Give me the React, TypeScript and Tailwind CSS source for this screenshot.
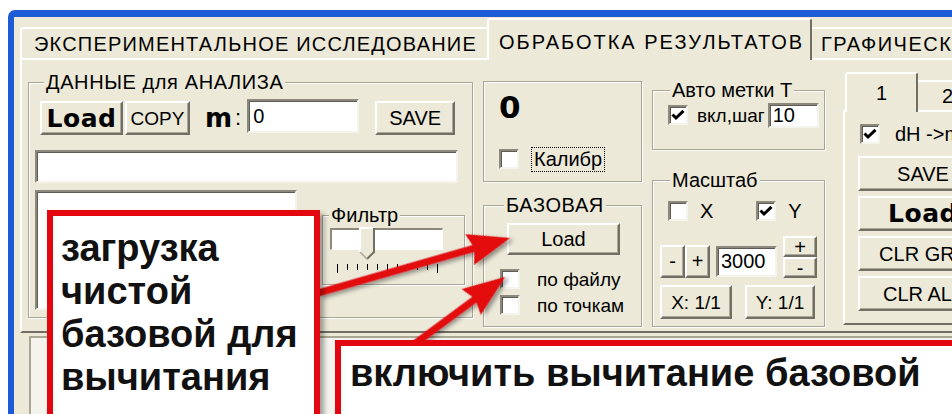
import React from "react";

type Kids = { children?: React.ReactNode; className?: string };

const RAISED =
  "flex items-center justify-center bg-[#ECE9D8] border-2 border-t-white border-l-white border-r-[#716F64] border-b-[#716F64] shadow-[inset_-1px_-1px_0_#ACA899]";
const SUNKEN =
  "bg-white border-2 border-t-[#8C897C] border-l-[#8C897C] border-r-[#F4F3EC] border-b-[#F4F3EC] shadow-[inset_1px_1px_0_#5E5C55]";
const ETCHED = "border border-[#A8A595] shadow-[inset_1px_1px_0_#fff,1px_1px_0_#fff]";

function Btn({ children, className = "" }: Kids) {
  return <div className={`${RAISED} ${className}`}>{children}</div>;
}

function Field({ children, className = "" }: Kids) {
  return <div className={`${SUNKEN} ${className}`}>{children}</div>;
}

function Tick() {
  return (
    <svg width="14" height="12" viewBox="0 0 14 12">
      <path d="M1.5 5.5 L5 9 L12.5 1.8" fill="none" stroke="#000" strokeWidth="3" />
    </svg>
  );
}

function CheckBox({ checked = false }: { checked?: boolean }) {
  return (
    <span className={`w-[20px] h-[20px] shrink-0 flex items-center justify-center ${SUNKEN}`}>
      {checked && <Tick />}
    </span>
  );
}

function Group({
  title,
  className = "",
  legendClass = "",
  children,
}: Kids & { title: string; legendClass?: string }) {
  return (
    <fieldset className={`${ETCHED} shrink-0 ${className}`}>
      <legend className={`px-[2px] text-[20px] leading-[20px] bg-[#ECE9D8] ${legendClass}`}>{title}</legend>
      {children}
    </fieldset>
  );
}

// trackbar thumb, pointing down
function Thumb() {
  return (
    <svg width="16" height="34" viewBox="0 0 16 34">
      <path d="M1 1 H15 V25 L8 32 L1 25 Z" fill="#ECE9D8" />
      <path d="M1 25 V1 H15" fill="none" stroke="#fff" strokeWidth="2" />
      <path d="M15 1 V25 L8 32" fill="none" stroke="#716F64" strokeWidth="2" />
      <path d="M1 25 L8 32" fill="none" stroke="#ACA899" strokeWidth="1.5" />
    </svg>
  );
}

function Arrow({ x, y, angle, len }: { x: number; y: number; angle: number; len: number }) {
  return (
    <g transform={`translate(${x} ${y}) rotate(${angle})`} filter="url(#arrowShadow)">
      <polygon
        points={`${-len},-3.5 -38,-3.5 -42,-16 0,0 -42,16 -38,3.5 ${-len},3.5`}
        fill="#E3080F"
      />
    </g>
  );
}

export default function App() {
  const ticks = Array.from({ length: 11 }, (_, i) => i);
  return (
    <div className="relative w-[952px] h-[414px] overflow-hidden bg-white font-['Liberation_Sans',Arial,sans-serif] text-black text-[20px] leading-none">
      <div className="h-[10px]" />
      <div className="flex h-[404px]">
        <div className="w-[8px] shrink-0" />
        <div className="flex-1 min-w-0 flex flex-col border-t-[7px] border-l-[6px] border-[#1D5AD6] rounded-tl-[7px] bg-[#ECE9D8] pl-[6px]">
          {/* page tabs */}
          <div className="flex items-end h-[41px] shrink-0">
            <div className="w-[467px] h-[31px] shrink-0 flex items-center pl-[12px] border-t-2 border-l-2 border-white rounded-tl-[3px] tracking-[1.2px] whitespace-nowrap">
              ЭКСПЕРИМЕНТАЛЬНОЕ ИССЛЕДОВАНИЕ
            </div>
            <div className="relative z-10 w-[325px] h-[42px] mb-[-2px] shrink-0 pt-[12px] pl-[10px] bg-[#ECE9D8] border-t-2 border-l-2 border-white border-r-2 border-r-[#716F64] rounded-t-[3px] tracking-[2px] whitespace-nowrap">
              ОБРАБОТКА РЕЗУЛЬТАТОВ
            </div>
            <div className="h-[31px] shrink-0 flex items-center pl-[9px] border-t-2 border-white tracking-[1.5px] whitespace-nowrap">
              ГРАФИЧЕСКОЕ ОТОБРАЖЕНИЕ
            </div>
          </div>

          {/* page body */}
          <div className="h-[275px] shrink-0 flex items-start border-t-2 border-l-2 border-white border-b-2 border-b-[#716F64]">
            {/* data group */}
            <Group
              title="ДАННЫЕ для АНАЛИЗА"
              className="ml-[6px] mt-[12px] w-[445px] h-[246px] pl-[10px]"
              legendClass="ml-[5px] tracking-[0.6px]"
            >
              <div className="flex items-center mt-[8px] h-[36px] ml-[1px]">
                <Btn className="w-[83px] h-[34px] font-['DejaVu_Sans',sans-serif] font-bold text-[25px] tracking-[0.5px]">
                  Load
                </Btn>
                <Btn className="ml-[2px] w-[65px] h-[34px] text-[19px]">COPY</Btn>
                <span className="ml-[15px] font-['DejaVu_Sans',sans-serif] font-bold text-[26px]">m</span>
                <span className="ml-[3px] text-[22px]">:</span>
                <Field className="ml-[6px] w-[112px] h-[34px] mt-[-5px] pl-[4px] flex items-center text-[20px]">0</Field>
                <Btn className="ml-[16px] w-[80px] h-[34px] text-[20px]">SAVE</Btn>
              </div>
              <Field className="mt-[14px] ml-[-4px] w-[423px] h-[33px]" />
              <div className="flex items-start mt-[7px] ml-[-4px]">
                <Field className="w-[262px] h-[120px]" />
                <Group title="Фильтр" className="ml-[25px] mt-[15px] w-[143px] h-[80px] pl-[4px]" legendClass="ml-[2px]">
                  <div className="relative h-[34px] mt-[3px]">
                    <div className="ml-[3px] w-[113px] h-[22px] bg-white border-t-2 border-l-2 border-[#8C897C] border-b border-r border-b-white border-r-white" />
                    <div className="absolute left-[32px] top-[-1px]">
                      <Thumb />
                    </div>
                  </div>
                  <div className="ml-[10px] mt-[2px] w-[101px] flex justify-between items-start">
                    {ticks.map((i) => (
                      <span
                        key={i}
                        className={i === 0 || i === 10 ? "w-[1px] h-[9px] bg-black" : "w-[1px] h-[6px] bg-black"}
                      />
                    ))}
                  </div>
                </Group>
              </div>
            </Group>

            {/* counter and base column */}
            <div className="ml-[10px] w-[159px] shrink-0 flex flex-col">
              <div className={`${ETCHED} mt-[21px] h-[101px] pl-[15px] pt-[10px]`}>
                <div className="font-['DejaVu_Sans',sans-serif] font-bold text-[31px]">0</div>
                <div className="flex items-center mt-[23px] h-[26px]">
                  <CheckBox />
                  <span className="ml-[12px] h-[25px] px-[2px] flex items-center border border-dotted border-black">
                    Калибр
                  </span>
                </div>
              </div>
              <Group title="БАЗОВАЯ" className="mt-[13px] h-[132px] pl-[16px]" legendClass="ml-[4px] tracking-[0.6px]">
                <Btn className="mt-[8px] ml-[7px] w-[113px] h-[32px]">Load</Btn>
                <div className="flex items-center mt-[13px] h-[22px]">
                  <CheckBox />
                  <span className="ml-[17px] text-[19px]">по файлу</span>
                </div>
                <div className="flex items-center mt-[4px] h-[22px]">
                  <CheckBox />
                  <span className="ml-[17px] text-[19px]">по точкам</span>
                </div>
              </Group>
            </div>

            {/* marks and scale column */}
            <div className="ml-[10px] w-[173px] shrink-0 flex flex-col">
              <Group title="Авто метки Т" className="mt-[20px] h-[70px] pl-[13px]" legendClass="ml-[4px]">
                <div className="flex items-center mt-[2px] h-[26px]">
                  <span className="ml-[2px]">
                    <CheckBox checked />
                  </span>
                  <span className="ml-[9px] text-[19px]">вкл,шаг</span>
                  <Field className="ml-[3px] w-[51px] h-[25px] pl-[3px] flex items-center">10</Field>
                </div>
              </Group>
              <Group title="Масштаб" className="mt-[20px] h-[157px] pl-[13px]" legendClass="ml-[4px]">
                <div className="flex items-center mt-[10px] h-[22px]">
                  <span className="ml-[2px]">
                    <CheckBox />
                  </span>
                  <span className="ml-[12px]">X</span>
                  <span className="ml-[43px]">
                    <CheckBox checked />
                  </span>
                  <span className="ml-[12px]">Y</span>
                </div>
                <div className="flex items-center mt-[14px] h-[42px]">
                  <Btn className="ml-[-6px] w-[25px] h-[33px] mt-[8px]">-</Btn>
                  <Btn className="w-[25px] h-[33px] mt-[8px]">+</Btn>
                  <Field className="ml-[6px] w-[61px] h-[31px] mt-[8px] pl-[3px] flex items-center">3000</Field>
                  <div className="ml-[6px] flex flex-col">
                    <Btn className="w-[34px] h-[21px]">+</Btn>
                    <Btn className="w-[34px] h-[21px]">-</Btn>
                  </div>
                </div>
                <div className="flex items-center mt-[7px] h-[34px]">
                  <Btn className="ml-[-6px] w-[72px] h-[34px] text-[19px]">X: 1/1</Btn>
                  <Btn className="ml-[13px] w-[70px] h-[34px] text-[19px]">Y: 1/1</Btn>
                </div>
              </Group>
            </div>

            {/* graph tabs */}
            <div className="ml-[18px] mt-[12px] w-[200px] shrink-0 flex flex-col">
              <div className="flex items-end h-[38px]">
                <div className="relative z-10 ml-[2px] w-[73px] h-[40px] mb-[-2px] flex items-center justify-center bg-[#ECE9D8] border-t-2 border-l-2 border-white border-r-2 border-r-[#716F64] rounded-t-[3px]">
                  1
                </div>
                <div className="w-[70px] h-[30px] pl-[24px] flex items-center border-t-2 border-white">2</div>
              </div>
              <div className="h-[215px] border-t-2 border-l-2 border-white border-b-2 border-b-[#716F64] pl-[13px] pt-[11px]">
                <div className="flex items-center h-[22px]">
                  <span className="ml-[2px]">
                    <CheckBox checked />
                  </span>
                  <span className="ml-[15px] whitespace-nowrap">dH -&gt;max</span>
                </div>
                <Btn className="mt-[11px] w-[130px] h-[35px]">SAVE</Btn>
                <Btn className="mt-[5px] w-[130px] h-[35px] font-['DejaVu_Sans',sans-serif] font-bold text-[25px] tracking-[0.5px]">
                  Load
                </Btn>
                <Btn className="mt-[5px] w-[130px] h-[35px]">CLR GRF</Btn>
                <Btn className="mt-[5px] w-[130px] h-[35px]">CLR ALL</Btn>
              </div>
            </div>
          </div>

          {/* graph area */}
          <div className="flex-1 flex pl-[9px] pt-[3px]">
            <div className="flex-1 border-l-2 border-t-2 border-[#A9A693] bg-[#F4F3EE]" />
          </div>
        </div>
      </div>

      {/* callout arrows */}
      <svg className="absolute left-0 top-0" width="952" height="414" viewBox="0 0 952 414">
        <defs>
          <filter id="arrowShadow" x="-20%" y="-50%" width="140%" height="200%">
            <feDropShadow dx="3" dy="3" stdDeviation="2" floodColor="#000" floodOpacity="0.4" />
          </filter>
        </defs>
        <Arrow x={510} y={238} angle={-15.98} len={200} />
        <Arrow x={505} y={277} angle={-36.47} len={116} />
      </svg>

      {/* callouts */}
      <div className="absolute left-[47px] top-[210px] w-[273px] h-[230px] border-[6px] border-[#E3080F] bg-white shadow-[4px_4px_5px_rgba(0,0,0,0.35)] pl-[8px] pt-[11px] font-bold text-[38px] leading-[43px] text-[#111]">
        загрузка
        <br />
        чистой
        <br />
        базовой для
        <br />
        вычитания
      </div>
      <div className="absolute left-[335px] top-[340px] w-[660px] h-[100px] border-[6px] border-[#E3080F] bg-white shadow-[4px_4px_5px_rgba(0,0,0,0.35)] pl-[9px] pt-[6px] font-bold text-[38px] leading-[43px] text-[#111] whitespace-nowrap">
        включить вычитание базовой
      </div>
    </div>
  );
}
